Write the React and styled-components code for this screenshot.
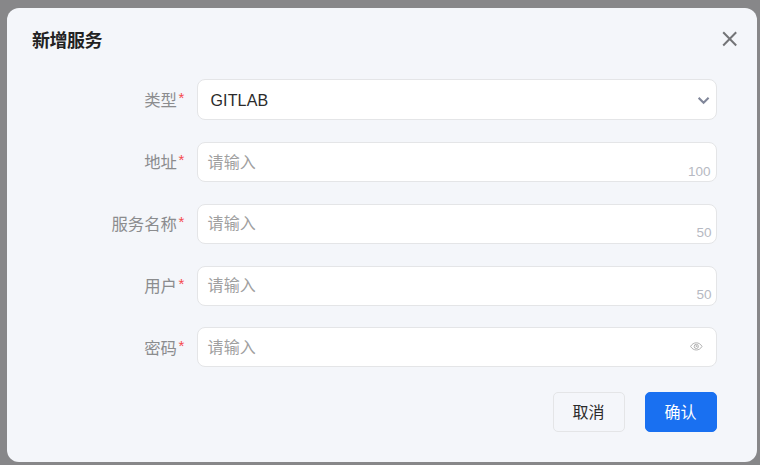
import React from 'react';
import styled, { createGlobalStyle } from 'styled-components';

const GlobalStyle = createGlobalStyle`
  * { box-sizing: border-box; }
  body {
    margin: 0;
    background: #878789;
    font-family: "Liberation Sans", "Noto Sans CJK SC", sans-serif;
    font-size: 16px;
    overflow: hidden;
  }
`;

const Overlay = styled.div`
  height: 465px;
  padding: 8px 3px 3px 7px;
`;

const Dialog = styled.section`
  width: 750px;
  height: 454px;
  border-radius: 12px;
  background: #f4f6fa;
  display: flex;
  flex-direction: column;
`;

const Header = styled.header`
  height: 71px;
  padding: 20px 20px 0 25px;
  display: flex;
  align-items: flex-start;
  justify-content: space-between;
`;

const Title = styled.h1`
  margin: 0;
  padding-top: 1px;
  font-size: 18px;
  line-height: 24px;
  font-weight: 700;
  letter-spacing: -0.5px;
  color: #222;
`;

const CloseButton = styled.button`
  border: 0;
  padding: 3px 0 0;
  background: none;
  color: #737477;
  line-height: 0;
`;

const Form = styled.form`
  display: flex;
  flex-direction: column;
  padding: 0 40px 0 0;
`;

const Row = styled.div`
  display: grid;
  grid-template-columns: 178px 520px;
  column-gap: 12px;
  height: ${(p) => p.$height || 40}px;
  margin-bottom: ${(p) => p.$gap ?? 22}px;
`;

const Label = styled.label`
  display: flex;
  justify-content: flex-end;
  color: #8b8c8e;
  font-size: 16.4px;
  line-height: 24px;
  padding-top: ${(p) => p.$top ?? 8}px;
`;

const Required = styled.span`
  width: 6.5px;
  margin-left: 1.5px;
  color: #f5484c;
  font-size: 15px;
  line-height: 24px;
  margin-top: -2px;
`;

const Field = styled.div`
  display: flex;
  justify-content: space-between;
  border: 1px solid #e4e5e7;
  border-radius: 8px;
  background: #fff;
  padding: 0 5px 0 ${(p) => (p.$filled ? 12.5 : 9.5)}px;
  color: ${(p) => (p.$filled ? '#2b2b2b' : '#a0a0a0')};
`;

const Value = styled.span`
  font-size: 16px;
  line-height: 24px;
  letter-spacing: 0.15px;
  padding-top: ${(p) => p.$top ?? 8}px;
`;

const Counter = styled.span`
  align-self: flex-end;
  font-size: 13.5px;
  line-height: 16px;
  margin: 0 ${(p) => p.$right || 0}px ${(p) => p.$bottom || 1}px 0;
  color: #b6b9c2;
`;

const Adornment = styled.span`
  line-height: 0;
  padding: ${(p) => p.$top}px ${(p) => p.$right}px 0 0;
`;

const Footer = styled.footer`
  display: flex;
  justify-content: flex-end;
  gap: 20px;
  padding: 25px 40px 0 0;
`;

const Button = styled.button`
  width: 72px;
  height: 40px;
  padding: 2px 1px 0 0;
  border: 1px solid ${(p) => (p.$primary ? '#1970f1' : '#e4e5e7')};
  border-radius: 5px;
  background: ${(p) => (p.$primary ? '#1970f1' : '#f4f6fa')};
  color: ${(p) => (p.$primary ? '#fff' : '#2b2b2b')};
  font: inherit;
  line-height: 24px;
`;

const fields = [
  { label: '地址', limit: 100, right: 0.5 },
  { label: '服务名称', limit: 50, right: -0.5, bottom: 2, valueTop: 7 },
  { label: '用户', limit: 50, right: -0.5, gap: 21, bottom: 2, valueTop: 7 },
  { label: '密码', gap: 0, labelTop: 9 },
];

function Close() {
  return (
    <svg width="15" height="16" viewBox="0 0 15 16" fill="none" stroke="currentColor" strokeWidth="2">
      <path d="M1.2 1.2 14.2 14.5M14.2 1.2 1.2 14.5" />
    </svg>
  );
}

function Chevron() {
  return (
    <svg width="12" height="8" viewBox="0 0 12 8" fill="none" stroke="#81879a" strokeWidth="2.1">
      <path d="M.6 .8 5.6 5.8l5-5" />
    </svg>
  );
}

function Eye() {
  return (
    <svg width="13" height="9" viewBox="0 0 13 9" fill="none" stroke="#aaa" strokeWidth=".9">
      <path d="M.6 4.4C3.2-.4 9.4-.4 12 4.4 9.4 9.2 3.2 9.2.6 4.4Z" />
      <circle cx="6.3" cy="4.4" r="2.1" />
      <path d="M6.2 3v1.5h1.2" />
    </svg>
  );
}

export default function App() {
  return (
    <>
      <GlobalStyle />
      <Overlay>
        <Dialog>
          <Header>
            <Title>新增服务</Title>
            <CloseButton aria-label="关闭"><Close /></CloseButton>
          </Header>
          <Form>
            <Row $height={41}>
              <Label $top={9}>类型<Required>*</Required></Label>
              <Field $filled>
                <Value $top={9}>GITLAB</Value>
                <Adornment $top={17} $right={1}><Chevron /></Adornment>
              </Field>
            </Row>
            {fields.map((f) => (
              <Row key={f.label} $gap={f.gap}>
                <Label $top={f.labelTop}>{f.label}<Required>*</Required></Label>
                <Field>
                  <Value $top={f.valueTop}>请输入</Value>
                  {f.limit
                    ? <Counter $right={f.right} $bottom={f.bottom}>{f.limit}</Counter>
                    : <Adornment $top={14} $right={8}><Eye /></Adornment>}
                </Field>
              </Row>
            ))}
          </Form>
          <Footer>
            <Button type="button">取消</Button>
            <Button type="button" $primary>确认</Button>
          </Footer>
        </Dialog>
      </Overlay>
    </>
  );
}
